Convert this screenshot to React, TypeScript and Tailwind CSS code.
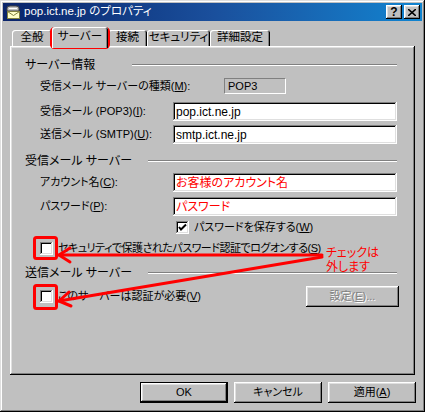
import React from 'react'

const raised = 'shadow-[inset_-1px_-1px_#000,inset_1px_1px_#fff,inset_-2px_-2px_#808080,inset_2px_2px_#dfdfdf]'
const sunken = 'shadow-[inset_-1px_-1px_#fff,inset_1px_1px_#808080,inset_-2px_-2px_#dfdfdf,inset_2px_2px_#000]'

function Heading({ label, lineClass, className }: { label: string; lineClass: string; className?: string }) {
  return (
    <div className={`flex items-center h-[14px] ${className ?? ''}`}>
      <span className="text-[12px]">{label}</span>
      <div className={`ml-auto border-y border-t-[#808080] border-b-white ${lineClass}`} />
    </div>
  )
}

function Field({ label, value, red, className }: { label: React.ReactNode; value: string; red?: boolean; className?: string }) {
  return (
    <div className={`flex items-center h-[19px] pl-[15px] ${className ?? ''}`}>
      <div className="w-[133px] whitespace-nowrap">{label}</div>
      <div className={`w-[224px] h-[19px] bg-white flex items-center pl-[3px] text-[12px] ${sunken} ${red ? 'text-[#ff0000]' : 'text-black'}`}>
        {value}
      </div>
    </div>
  )
}

function Checkbox({ checked }: { checked?: boolean }) {
  return (
    <div className={`w-[13px] h-[13px] bg-white shrink-0 ${sunken}`}>
      {checked && (
        <svg width="13" height="13" viewBox="0 0 13 13">
          <polyline points="3,6 5,8.5 10,3.5" fill="none" stroke="#000" strokeWidth="2" />
        </svg>
      )}
    </div>
  )
}

function Tab({ label, selected, className }: { label: string; selected?: boolean; className?: string }) {
  return (
    <div
      className={`flex items-center justify-center whitespace-nowrap text-[11.5px] rounded-t-[3px] bg-[#c0c0c0] shadow-[inset_1px_1px_#fff,inset_-1px_0_#000,inset_-2px_0_#808080] ${
        selected ? 'h-[21px] -mb-[2px] relative z-10 pb-[2px]' : 'h-[16px]'
      } ${className ?? ''}`}
    >
      {label}
    </div>
  )
}

function Btn({ children, isDefault, className }: { children: React.ReactNode; isDefault?: boolean; className?: string }) {
  return (
    <div className={`w-[88px] h-[21px] ${isDefault ? 'border border-black' : ''} ${className ?? ''}`}>
      <div className={`w-full h-full flex items-center justify-center bg-[#c0c0c0] ${raised}`}>{children}</div>
    </div>
  )
}

export default function App() {
  return (
    <div className="relative w-[425px] h-[412px] bg-[#c0c0c0] p-[3px] text-[11px] leading-none text-black [font-feature-settings:'palt'] font-['Liberation_Sans','Noto_Sans_CJK_JP',sans-serif] shadow-[inset_-1px_-1px_#000,inset_1px_1px_#dfdfdf,inset_-2px_-2px_#808080,inset_2px_2px_#fff] overflow-hidden">
      {/* title bar */}
      <div className="h-[18px] flex items-center pl-[2px] pr-[2px] bg-gradient-to-r from-[#0a246a] via-[#1a4f9c] to-[#1084d0]">
        <svg width="16" height="16" viewBox="0 0 16 16" className="shrink-0">
          <path d="M2 7 L2 4 Q2 2 5 2 L11 2 Q14 2 14 4 L14 7 Z" fill="#c0c0c0" stroke="#404040" />
          <rect x="4" y="4" width="8" height="1" fill="#fff" />
          <rect x="2.5" y="7.5" width="12" height="7" fill="#ffffc8" stroke="#808040" />
          <polyline points="2.5,7.5 8.5,11.5 14.5,7.5" fill="none" stroke="#808040" />
        </svg>
        <span className="ml-[3px] text-white text-[11.5px]">pop.ict.ne.jp のプロパティ</span>
        <div className="ml-auto flex gap-[2px]">
          <div className={`w-[16px] h-[14px] bg-[#c0c0c0] flex items-center justify-center font-bold text-[12px] ${raised}`}>?</div>
          <div className={`w-[16px] h-[14px] bg-[#c0c0c0] flex items-center justify-center ${raised}`}>
            <svg width="8" height="7" viewBox="0 0 8 7">
              <path d="M0 0 L8 7 M8 0 L0 7" stroke="#000" strokeWidth="1.6" />
            </svg>
          </div>
        </div>
      </div>

      {/* tabs */}
      <div className="mt-[6px] ml-[9px] h-[19px] flex items-end">
        <Tab label="全般" className="w-[40px]" />
        <Tab label="サーバー" selected className="w-[56px]" />
        <Tab label="接続" className="w-[39px]" />
        <Tab label="セキュリティ" className="w-[63px]" />
        <Tab label="詳細設定" className="w-[60px]" />
      </div>

      {/* panel */}
      <div className="ml-[7px] w-[405px] h-[329px] pt-[12px] pl-[15px] pr-[18px] shadow-[inset_-1px_-1px_#000,inset_1px_1px_#fff,inset_-2px_-2px_#808080,inset_2px_2px_#dfdfdf]">
        <Heading label="サーバー情報" lineClass="w-[265px]" />

        <div className="mt-[6px] flex items-center h-[16px] pl-[15px]">
          <div className="w-[184px] whitespace-nowrap">
            受信メール サーバーの種類(<u>M</u>):
          </div>
          <div className="w-[62px] h-[16px] flex items-center pl-[3px] border-t border-l border-t-[#808080] border-l-[#808080] border-b border-r border-b-white border-r-white">
            POP3
          </div>
        </div>

        <Field className="mt-[8px]" label={<>受信メール (POP3)(<u>I</u>):</>} value="pop.ict.ne.jp" />
        <Field className="mt-[4px]" label={<>送信メール (SMTP)(<u>U</u>):</>} value="smtp.ict.ne.jp" />

        <Heading className="mt-[10px]" label="受信メール サーバー" lineClass="w-[249px]" />

        <Field className="mt-[5px]" label={<>アカウント名(<u>C</u>):</>} value="お客様のアカウント名" red />
        <Field className="mt-[5px]" label={<>パスワード(<u>P</u>):</>} value="パスワード" red />

        <div className="mt-[4px] h-[15px] flex items-center pl-[151px] gap-[5px]">
          <Checkbox checked />
          <span>
            パスワードを保存する(<u>W</u>)
          </span>
        </div>

        <div className="mt-[6px] h-[15px] flex items-center pl-[15px] gap-[5px]">
          <Checkbox />
          <span className="whitespace-nowrap tracking-[-0.5px]">
            セキュリティで保護されたパスワード認証でログオンする(<u>S</u>)
          </span>
        </div>

        <Heading className="mt-[10px]" label="送信メール サーバー" lineClass="w-[249px]" />

        <div className="mt-[5px] h-[22px] flex items-center pl-[15px] gap-[5px]">
          <Checkbox />
          <span>
            このサーバーは認証が必要(<u>V</u>)
          </span>
          <div className={`ml-auto mr-[-2px] w-[93px] h-[21px] flex items-center justify-center bg-[#c0c0c0] text-[#808080] [text-shadow:1px_1px_#fff] ${raised}`}>
            設定(<u>E</u>)...
          </div>
        </div>
      </div>

      {/* dialog buttons */}
      <div className="mt-[7px] flex justify-end gap-[6px] pr-[6px]">
        <Btn isDefault>OK</Btn>
        <Btn>キャンセル</Btn>
        <Btn>
          <span>
            適用(<u>A</u>)
          </span>
        </Btn>
      </div>

      {/* red annotations */}
      <svg className="absolute left-0 top-0 pointer-events-none" width="425" height="412" viewBox="0 0 425 412">
        <g fill="none" stroke="#ff0000" strokeWidth="3" strokeLinecap="round" strokeLinejoin="round">
          <rect x="51.5" y="28.5" width="57" height="19" rx="3" />
          <rect x="34.5" y="237.5" width="22" height="21" rx="2" />
          <rect x="34.5" y="285.5" width="22" height="23" rx="2" />
          <line x1="322" y1="255" x2="59" y2="255" />
          <polyline points="70,248 59,255 70,262" />
          <line x1="322" y1="257" x2="59" y2="301" />
          <polyline points="69,292 59,301 71,306" />
        </g>
      </svg>
      <div className="absolute left-[326px] top-[245px] text-[#ff0000] text-[12px] leading-[14px] font-['Noto_Sans_CJK_JP',sans-serif]">
        <div>チェックは</div>
        <div>外します</div>
      </div>
    </div>
  )
}
